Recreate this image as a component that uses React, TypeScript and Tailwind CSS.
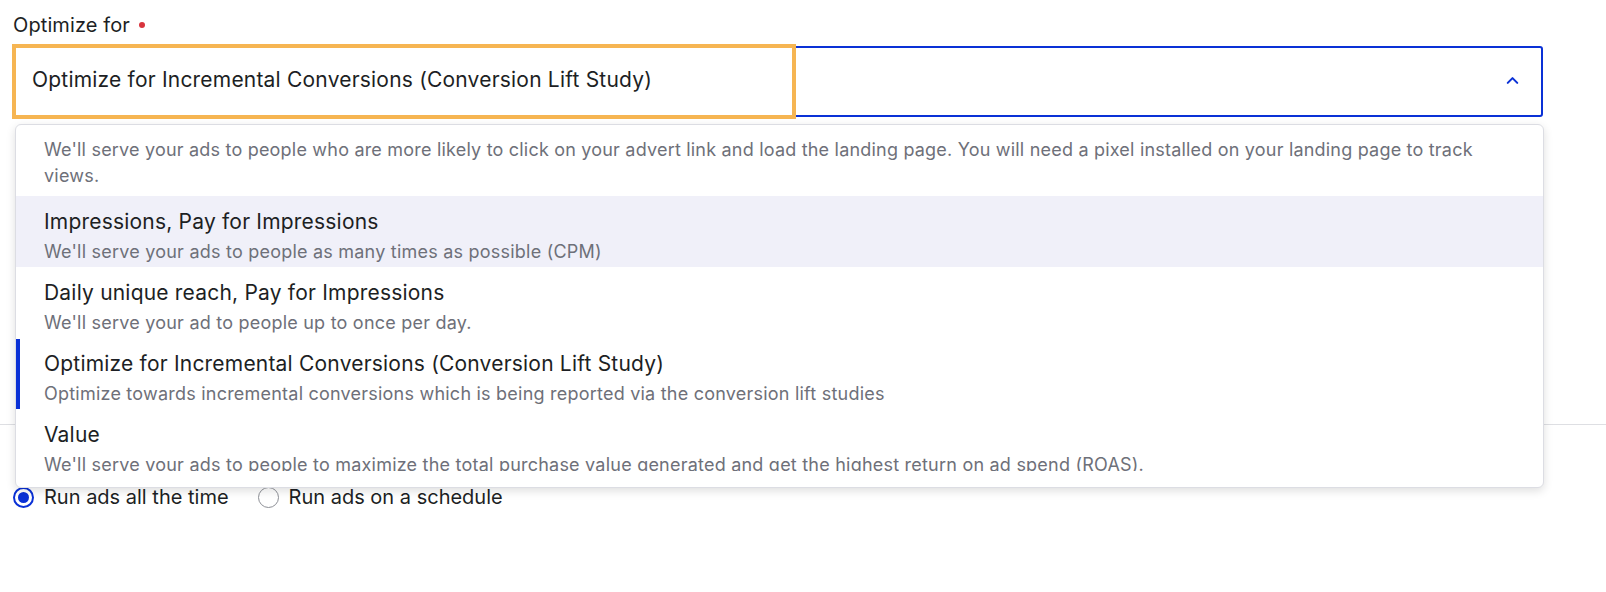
import { ChevronUp } from "lucide-react";

const options = [
  {
    title: "Impressions, Pay for Impressions",
    desc: "We'll serve your ads to people as many times as possible (CPM)",
    hover: true,
  },
  {
    title: "Daily unique reach, Pay for Impressions",
    desc: "We'll serve your ad to people up to once per day.",
  },
  {
    title: "Optimize for Incremental Conversions (Conversion Lift Study)",
    desc: "Optimize towards incremental conversions which is being reported via the conversion lift studies",
    selected: true,
  },
  {
    title: "Value",
    desc: "We'll serve your ads to people to maximize the total purchase value generated and get the highest return on ad spend (ROAS).",
  },
];

function Option({
  title,
  desc,
  hover,
  selected,
}: {
  title: string;
  desc: string;
  hover?: boolean;
  selected?: boolean;
}) {
  return (
    <div
      className={`relative h-[71px] shrink-0 px-[28px] pt-[11px] ${
        hover ? "bg-[#f0f0f9]" : "bg-white"
      }`}
    >
      {selected && <div className="absolute left-0 top-[1px] h-[73px] w-[4px] bg-[#0a31d6]" />}
      <div className="text-[21px] leading-[30px] tracking-[0.2px] text-[#1d1f24]">{title}</div>
      <div className="mt-[2px] text-[18px] leading-[26px] tracking-[0.22px] text-[#6e7079]">{desc}</div>
    </div>
  );
}

export default function App() {
  return (
    <div className="min-h-[592px] w-full bg-white pl-[13px] pt-[13px] font-['Inter',sans-serif]">
      <div className="flex items-center gap-[9px] text-[20px] leading-[24px] tracking-[0.1px] text-[#1d1f24]">
        Optimize for
        <span className="h-[6px] w-[6px] rounded-full bg-[#d8343d]" />
      </div>

      <div className="relative mt-[9px] w-[1530px]">
        {/* select */}
        <div className="flex h-[71px] items-center justify-between rounded-[3px] border-2 border-[#0a31d6] pb-[3px] pl-[17px] pr-[19px]">
          <span className="text-[21px] tracking-[0.2px] text-[#1d1f24]">
            Optimize for Incremental Conversions (Conversion Lift Study)
          </span>
          <ChevronUp className="h-[19px] w-[19px] text-[#0a31d6]" strokeWidth={2.6} />
        </div>

        {/* highlight annotation */}
        <div className="pointer-events-none absolute left-[-1px] top-[-2px] h-[75px] w-[784px] border-4 border-[#f6b552]" />

        {/* dropdown menu */}
        <div className="absolute left-[2px] top-[78px] z-10 w-[1529px] rounded-[6px] border border-[#dcdde3] bg-white pb-[16px] shadow-[0_3px_10px_rgba(0,0,0,0.13)]">
          <div className="flex h-[346px] flex-col overflow-hidden rounded-t-[6px]">
            <div className="h-[71px] shrink-0 px-[28px] pt-[12px] text-[18px] leading-[26px] tracking-[0.2px] text-[#6e7079]">
              We'll serve your ads to people who are more likely to click on your advert link and load the
              landing page. You will need a pixel installed on your landing page to track views.
            </div>
            {options.map((o) => (
              <Option key={o.title} {...o} />
            ))}
          </div>
        </div>
      </div>

      <div className="mt-[307px] -ml-[13px] h-px bg-[#dedfe3]" />

      <div className="mt-[57px] flex items-center text-[20px] text-[#1d1f24]">
        <label className="flex items-center gap-[10px]">
          <span className="flex h-[21px] w-[21px] items-center justify-center rounded-full border-2 border-[#0a31d6]">
            <span className="h-[11px] w-[11px] rounded-full bg-[#0a31d6]" />
          </span>
          Run ads all the time
        </label>
        <label className="ml-[29px] flex items-center gap-[10px]">
          <span className="h-[21px] w-[21px] rounded-full border border-[#8d8f96]" />
          Run ads on a schedule
        </label>
      </div>
    </div>
  );
}
